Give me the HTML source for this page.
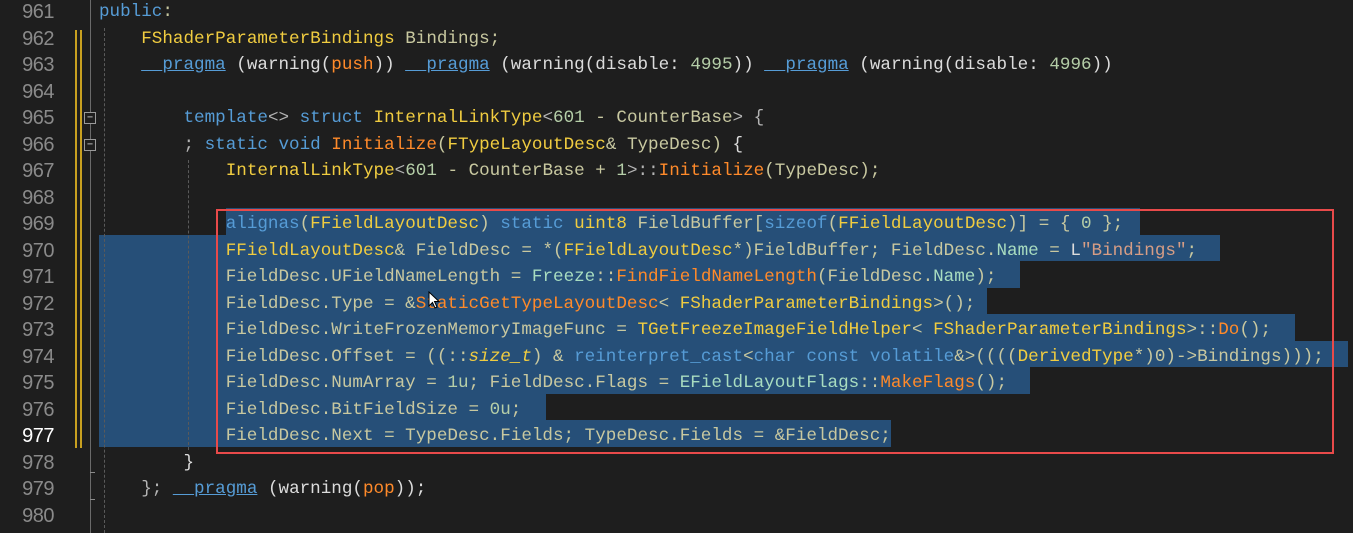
<!DOCTYPE html>
<html><head><meta charset="utf-8"><style>
html,body{margin:0;padding:0;background:#1e1e1e;width:1353px;height:533px;overflow:hidden;position:relative}
.ln{position:absolute;left:0;width:54px;text-align:right;font:20px "Liberation Sans Narrow","Liberation Sans",sans-serif;color:#8a8a8a;line-height:26.5px;letter-spacing:-0.5px}
.c{position:absolute;left:99px;font:17.6px "Liberation Mono",monospace;color:#c8c8a0;line-height:26.5px;white-space:pre}
.sel{position:absolute;background:#264f78;height:26.5px}
.k{color:#569cd6}.t{color:#f0cc40}.f{color:#ff8a2a}.w{color:#dcdcdc}.n{color:#b5cea8}.m{color:#a8dcc0}.s{color:#d69d85}.u{color:#569cd6;text-decoration:underline}.p{color:#b4b4b4}
.g{position:absolute;border-left:1px dashed #5a5a5a}
</style></head><body>
<div class="sel" style="left:226px;top:208px;width:914px"></div>
<div class="sel" style="left:99px;top:234.5px;width:1121px"></div>
<div class="sel" style="left:99px;top:261px;width:921px"></div>
<div class="sel" style="left:99px;top:287.5px;width:888px"></div>
<div class="sel" style="left:99px;top:314px;width:1196px"></div>
<div class="sel" style="left:99px;top:340.5px;width:1249px"></div>
<div class="sel" style="left:99px;top:367px;width:931px"></div>
<div class="sel" style="left:99px;top:393.5px;width:447px"></div>
<div class="sel" style="left:99px;top:420px;width:792px"></div>
<div style="position:absolute;left:75px;top:30px;width:7px;height:418px;border-left:2px solid #c8a020;border-right:2px solid #c8a020;box-sizing:border-box"></div>
<div style="position:absolute;left:90px;top:0;width:1px;height:533px;background:#6a6a6a"></div>
<div style="position:absolute;left:84px;top:112px;width:10px;height:10px;border:1px solid #9a9a9a;background:#1e1e1e;font:10px monospace;color:#ccc;line-height:9px;text-align:center">−</div>
<div style="position:absolute;left:84px;top:139px;width:10px;height:10px;border:1px solid #9a9a9a;background:#1e1e1e;font:10px monospace;color:#ccc;line-height:9px;text-align:center">−</div>
<div style="position:absolute;left:90px;top:472px;width:5px;height:1px;background:#8a8a8a"></div>
<div style="position:absolute;left:90px;top:499px;width:5px;height:1px;background:#8a8a8a"></div>
<div class="g" style="left:104px;top:28px;height:505px"></div>
<div class="g" style="left:188px;top:160px;height:290px"></div>
<div class="ln" style="top:-1px">961</div>
<div class="ln" style="top:25.5px">962</div>
<div class="ln" style="top:52px">963</div>
<div class="ln" style="top:78.5px">964</div>
<div class="ln" style="top:105px">965</div>
<div class="ln" style="top:131.5px">966</div>
<div class="ln" style="top:158px">967</div>
<div class="ln" style="top:184.5px">968</div>
<div class="ln" style="top:211px">969</div>
<div class="ln" style="top:237.5px">970</div>
<div class="ln" style="top:264px">971</div>
<div class="ln" style="top:290.5px">972</div>
<div class="ln" style="top:317px">973</div>
<div class="ln" style="top:343.5px">974</div>
<div class="ln" style="top:370px">975</div>
<div class="ln" style="top:396.5px">976</div>
<div class="ln" style="top:423px;color:#fff">977</div>
<div class="ln" style="top:449.5px">978</div>
<div class="ln" style="top:476px">979</div>
<div class="ln" style="top:502.5px">980</div>
<div class="c" style="top:-1px"><span class="k">public</span>:</div>
<div class="c" style="top:25.5px">    <span class="t">FShaderParameterBindings</span> Bindings;</div>
<div class="c" style="top:52px">    <span class="u">__pragma</span> <span class="w">(warning(</span><span class="f">push</span><span class="w">))</span> <span class="u">__pragma</span> <span class="w">(warning(disable:</span> <span class="n">4995</span><span class="w">))</span> <span class="u">__pragma</span> <span class="w">(warning(disable:</span> <span class="n">4996</span><span class="w">))</span></div>
<div class="c" style="top:105px">        <span class="k">template</span><span class="p">&lt;&gt;</span> <span class="k">struct</span> <span class="t">InternalLinkType</span><span class="p">&lt;</span><span class="n">601</span> - CounterBase<span class="p">&gt; {</span></div>
<div class="c" style="top:131.5px">        <span class="p">;</span> <span class="k">static void</span> <span class="f">Initialize</span>(<span class="t">FTypeLayoutDesc</span>&amp; TypeDesc) <span class="w">{</span></div>
<div class="c" style="top:158px">            <span class="t">InternalLinkType</span><span class="p">&lt;</span><span class="n">601</span> - CounterBase + <span class="n">1</span><span class="p">&gt;::</span><span class="f">Initialize</span>(TypeDesc);</div>
<div class="c" style="top:211px">            <span class="k">alignas</span>(<span class="t">FFieldLayoutDesc</span>) <span class="k">static</span> <span class="t">uint8</span> FieldBuffer[<span class="k">sizeof</span>(<span class="t">FFieldLayoutDesc</span>)] = { <span class="n">0</span> };</div>
<div class="c" style="top:237.5px">            <span class="t">FFieldLayoutDesc</span>&amp; FieldDesc = *(<span class="t">FFieldLayoutDesc</span>*)FieldBuffer; FieldDesc.<span class="m">Name</span> = <span class="w">L</span><span class="s">"Bindings"</span>;</div>
<div class="c" style="top:264px">            FieldDesc.UFieldNameLength = <span class="m">Freeze</span>::<span class="f">FindFieldNameLength</span>(FieldDesc.<span class="m">Name</span>);</div>
<div class="c" style="top:290.5px">            FieldDesc.Type = &amp;<span class="f">StaticGetTypeLayoutDesc</span>&lt; <span class="t">FShaderParameterBindings</span>&gt;();</div>
<div class="c" style="top:317px">            FieldDesc.WriteFrozenMemoryImageFunc = <span class="t">TGetFreezeImageFieldHelper</span>&lt; <span class="t">FShaderParameterBindings</span>&gt;::<span class="f">Do</span>();</div>
<div class="c" style="top:343.5px">            FieldDesc.Offset = ((::<i class="t">size_t</i>) &amp; <span class="k">reinterpret_cast</span>&lt;<span class="k">char const volatile</span>&amp;&gt;((((<span class="t">DerivedType</span>*)0)-&gt;Bindings)));</div>
<div class="c" style="top:370px">            FieldDesc.NumArray = <span class="n">1u</span>; FieldDesc.Flags = <span class="m">EFieldLayoutFlags</span>::<span class="f">MakeFlags</span>();</div>
<div class="c" style="top:396.5px">            FieldDesc.BitFieldSize = <span class="n">0u</span>;</div>
<div class="c" style="top:423px">            FieldDesc.Next = TypeDesc.Fields; TypeDesc.Fields = &amp;FieldDesc;</div>
<div class="c" style="top:449.5px">        <span class="w">}</span></div>
<div class="c" style="top:476px">    <span class="p">};</span> <span class="u">__pragma</span> <span class="w">(warning(</span><span class="f">pop</span><span class="w">));</span></div>
<div style="position:absolute;left:216px;top:209px;width:1118px;height:245px;border:2px solid #e84a4a;box-sizing:border-box"></div>
<svg style="position:absolute;left:428px;top:291px" width="12" height="18" viewBox="0 0 12 18"><path d="M1 1 L1 15 L4.5 11.5 L7 17 L9 16 L6.5 10.5 L11 10.5 Z" fill="#fff" stroke="#000" stroke-width="1"/></svg>
</body></html>
